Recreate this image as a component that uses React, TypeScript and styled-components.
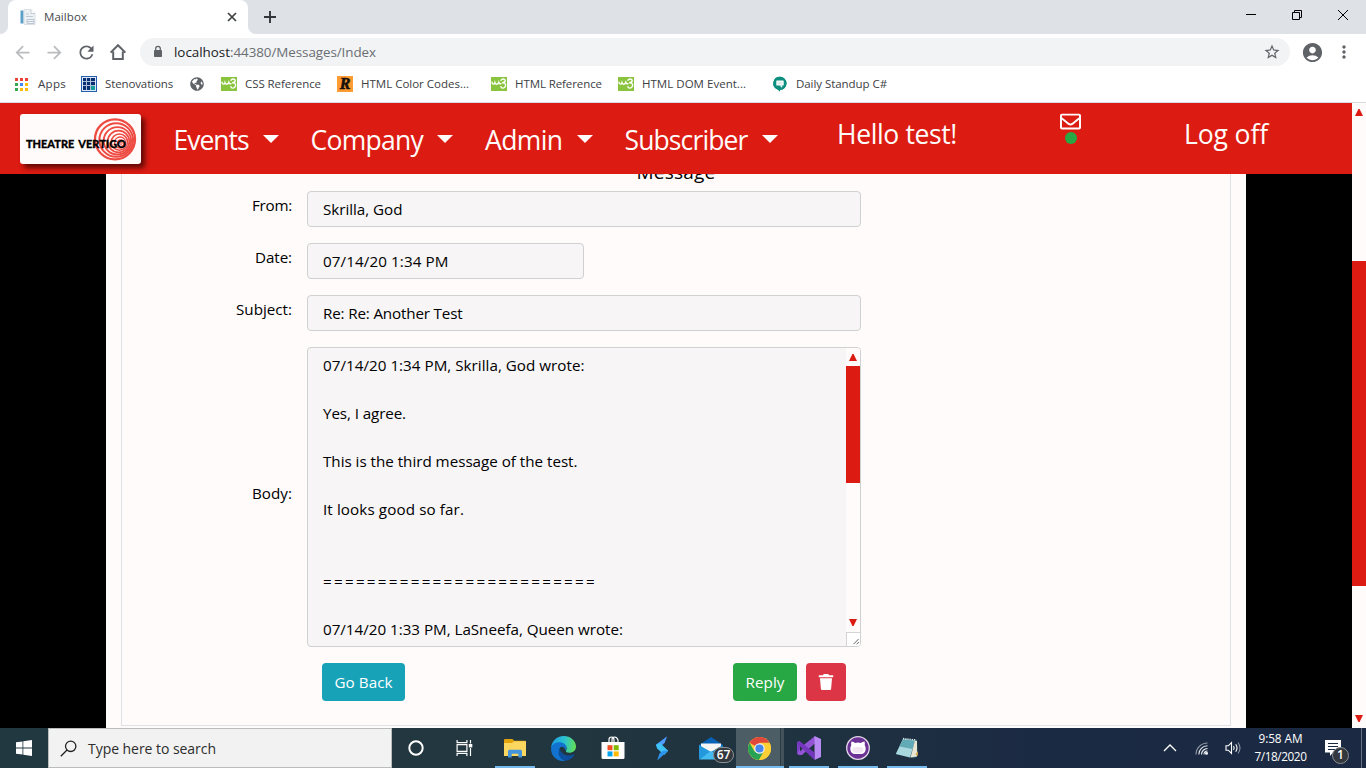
import React, { useLayoutEffect, useRef } from 'react';
import styled, { createGlobalStyle } from 'styled-components';
import { MdArrowBack, MdArrowForward, MdRefresh, MdStarBorder, MdAccountCircle, MdMoreVert } from 'react-icons/md';
import { FaGlobeAmericas, FaRegEnvelope } from 'react-icons/fa';

const red = '#dc1b12';
const snow = '#fffbfa';

const Global = createGlobalStyle`
  * { box-sizing: border-box; }
  html, body { margin: 0; padding: 0; overflow: hidden; }
  body { font-family: "Open Sans", "Noto Sans", sans-serif; color: #000; }
  svg { display: block; flex: none; }
`;

const Screen = styled.div`
  width: 1366px;
  height: 768px;
  display: flex;
  flex-direction: column;
  background: #fff;
  overflow: hidden;
`;

const FitSpan = styled.span`
  display: inline-block;
  white-space: pre;
`;

/* Text whose tracking is adjusted so that it fills the given width. */
function Fit({ w, children }: { w: number; children: string }) {
  const ref = useRef<HTMLSpanElement>(null);
  useLayoutEffect(() => {
    const el = ref.current;
    if (!el) return;
    el.style.letterSpacing = '0px';
    const natural = el.getBoundingClientRect().width;
    el.style.letterSpacing = `${(w - natural) / children.length}px`;
  }, [w, children]);
  return <FitSpan ref={ref}>{children}</FitSpan>;
}

/* ---------- browser frame ---------- */
const TabStrip = styled.div`
  height: 34px;
  flex: none;
  display: flex;
  background: #dee1e6;
`;
const TabFoot = styled.div<{ $side: 'left' | 'right' }>`
  width: 8px;
  background: radial-gradient(circle at ${p => (p.$side === 'left' ? '0 26px' : '8px 26px')}, #dee1e6 7.5px, #fff 8.5px);
  clip-path: inset(26px 0 0 0);
`;
const Tab = styled.div`
  width: 240px;
  display: flex;
  align-items: center;
  padding: 0 10px 0 12px;
  border-radius: 8px 8px 0 0;
  background: #fff;
  font-size: 11.5px;
  color: #45494d;
`;
const TabTitle = styled.div`
  flex: 1;
  margin-left: 8px;
  padding-bottom: 2px;
`;
const NewTab = styled.div`
  width: 28px;
  display: flex;
  align-items: center;
  justify-content: center;
`;
const WindowButtons = styled.div`
  margin-left: auto;
  height: 29px;
  display: flex;
`;
const WindowButton = styled.div`
  width: 46px;
  display: flex;
  align-items: center;
  justify-content: center;
`;
const Toolbar = styled.div`
  height: 36px;
  flex: none;
  display: flex;
  align-items: center;
  padding-left: 6px;
  color: #5f6368;
`;
const ToolButton = styled.div<{ $dim?: boolean }>`
  width: 32px;
  display: flex;
  justify-content: center;
  color: ${p => (p.$dim ? '#babcbe' : '#5f6368')};
`;
const Address = styled.div`
  width: 1150px;
  height: 28px;
  margin: 0 6px;
  display: flex;
  align-items: center;
  padding: 0 9px 0 13px;
  border-radius: 14px;
  background: #f1f3f4;
  font-size: 13.4px;
`;
const Url = styled.div`
  flex: 1;
  display: flex;
  margin-left: 11px;
  color: #6a6e73;
`;
const Host = styled.span`
  color: #202124;
`;
const Bookmarks = styled.div`
  height: 32px;
  flex: none;
  display: flex;
  padding: 0 0 4px 15px;
`;
const Bookmark = styled.div<{ $w: number }>`
  width: ${p => p.$w}px;
  display: flex;
  align-items: center;
  font-size: 11.5px;
  line-height: 14px;
  color: #3c4043;

  & > span {
    padding-bottom: 1px;
  }
`;
const BookmarkIcon = styled.div<{ $w?: number }>`
  width: ${p => p.$w ?? 24}px;
  color: #5f6368;
`;
const FrameLine = styled.div`
  height: 1px;
  flex: none;
  background: #d8dadf;
`;

/* ---------- page ---------- */
const Page = styled.div`
  height: 625px;
  flex: none;
  display: flex;
  background: ${snow};
`;
const PageBody = styled.div`
  width: 1352px;
  display: flex;
  flex-direction: column;
`;
const Nav = styled.nav`
  height: 71px;
  flex: none;
  display: flex;
  align-items: flex-start;
  padding-left: 20px;
  background: ${red};
  color: ${snow};
  font-size: 26.5px;
  line-height: 36px;
`;
const Brand = styled.div`
  width: 121px;
  height: 50px;
  margin: 11px 32.5px 0 0;
  border-radius: 3px;
  background: ${snow};
  box-shadow: 4px 4px 5px rgba(50, 0, 0, 0.7);
`;
const NavItem = styled.div`
  display: flex;
  align-items: center;
  margin: 19px 32px 0 0;
`;
const Caret = styled.span`
  margin: 0 0 3px 14px;
  border: 8px solid transparent;
  border-top-color: ${snow};
  border-bottom: 0;
`;
const Greeting = styled.div`
  width: 223px;
  margin: 13px 0 0 27.5px;
`;
const Inbox = styled.div`
  width: 21px;
  margin: 8px 103px 0 0;
  display: flex;
  flex-direction: column;
  align-items: center;
`;
const UnreadDot = styled.span`
  width: 12px;
  height: 12px;
  border-radius: 50%;
  background: #28a745;
`;
const LogOff = styled.div`
  margin-top: 13px;
`;
const Content = styled.main`
  height: 554px;
  display: flex;
  justify-content: center;
  background: #000;
  overflow: hidden;
`;
const Container = styled.div`
  width: 1140px;
  padding: 0 15px 2px;
  background: ${snow};
`;
const Card = styled.section`
  display: flow-root;
  height: 552px;
  border: 1px solid #dee2e6;
  border-top: 0;
  font-size: 15.2px;
  line-height: 24px;
`;
const Heading = styled.h5`
  margin: -14px 0 7px;
  font-size: 19px;
  font-weight: 500;
  line-height: 24px;
  text-align: center;
`;
const FormRow = styled.div<{ $middle?: boolean }>`
  display: flex;
  align-items: ${p => (p.$middle ? 'center' : 'flex-start')};
  margin-bottom: 16px;
`;
const Label = styled.label<{ $top?: number; $bottom?: number }>`
  width: 185px;
  padding: ${p => p.$top ?? 2}px 15px ${p => p.$bottom ?? 0}px 0;
  text-align: right;
`;
const Field = styled.div<{ $w?: number }>`
  width: ${p => p.$w ?? 554}px;
  height: 36px;
  padding: 5px 15px;
  border: 1px solid #ced0d2;
  border-radius: 4px;
  background: #f7f5f6;
`;
const TextBox = styled.div`
  width: 554px;
  height: 300px;
  display: flex;
  border: 1px solid #ced0d2;
  border-radius: 4px;
  background: #f7f5f6;
  overflow: hidden;
`;
const Lines = styled.div`
  flex: 1;
  padding: 5px 0 0 15px;
`;
const Line = styled.div`
  height: 24px;
`;
const ScrollBar = styled.div`
  width: 14px;
  flex: none;
  display: flex;
  flex-direction: column;
  background: ${snow};
`;
const ArrowBox = styled.div<{ $h: number }>`
  height: ${p => p.$h}px;
  flex: none;
  display: flex;
  align-items: center;
  justify-content: center;
`;
const Thumb = styled.div<{ $before?: number; $h: number }>`
  height: ${p => p.$h}px;
  flex: none;
  margin: ${p => p.$before ?? 0}px 0 auto;
  background: ${red};
`;
const Grip = styled.div`
  height: 14px;
  border: solid #d5d3d3;
  border-width: 1px 0 0 1px;
  background: #fff;
`;
const Actions = styled.div`
  display: flex;
  padding-left: 200px;
`;
const Button = styled.button<{ $w: number; $color: string; $ml?: string }>`
  width: ${p => p.$w}px;
  height: 38px;
  display: flex;
  align-items: center;
  justify-content: center;
  margin-left: ${p => p.$ml ?? '0'};
  padding: 0;
  border: 0;
  border-radius: 4px;
  background: ${p => p.$color};
  color: #fff;
  font: inherit;
`;

/* ---------- task bar ---------- */
const TaskBar = styled.footer`
  height: 40px;
  flex: none;
  display: flex;
  background: linear-gradient(90deg, #213840 0%, #22373f 35%, #1f3240 60%, #1b2a43 75%, #1b2942 100%);
  color: #fff;
`;
const TaskCell = styled.div<{ $w?: number }>`
  width: ${p => p.$w ?? 48}px;
  display: flex;
  align-items: center;
  justify-content: center;
`;
const SearchBox = styled.div`
  width: 344px;
  display: flex;
  align-items: center;
  padding-left: 11px;
  border: 1px solid #b9bcbd;
  background: #f2f2f2;
  color: #2d2d2d;
  font-size: 14px;
`;
const SearchText = styled.div`
  margin-left: 11px;
`;
const TaskApps = styled.div`
  display: flex;
  margin-left: 2px;
`;
const TaskApp = styled.div<{ $open?: boolean; $active?: boolean }>`
  position: relative;
  width: 49px;
  display: flex;
  align-items: center;
  justify-content: center;
  background: ${p => (p.$active ? 'linear-gradient(90deg, transparent 1px, #4d5d65 1px 45px, #2b3b44 45px 46px, #43525b 46px)' : 'none')};
  &::after {
    content: '';
    position: absolute;
    bottom: 0;
    left: ${p => (p.$active ? 1 : 5)}px;
    right: ${p => (p.$active ? 0 : 4)}px;
    height: 2px;
    background: ${p => (p.$open ? '#76b9ed' : 'transparent')};
  }
`;
const Count = styled.span<{ $round?: boolean }>`
  position: absolute;
  left: ${p => (p.$round ? 18 : 27)}px;
  top: 19px;
  width: ${p => (p.$round ? 17 : 21)}px;
  height: ${p => (p.$round ? 17 : 16)}px;
  border: 1px solid #8b9094;
  border-radius: 9px;
  background: #32383d;
  color: #fff;
  font-size: 12px;
  font-weight: 600;
  line-height: 14px;
  text-align: center;
`;
const Tray = styled.div`
  margin-left: auto;
  display: flex;
`;
const Clock = styled.div`
  width: 66px;
  padding: 1px 1px 0 0;
  font-size: 11.8px;
  line-height: 18px;
  text-align: center;
`;
const ActionCenter = styled.div`
  position: relative;
  width: 47px;
  padding: 12px 0 0 11px;
`;
const DesktopEdge = styled.div`
  width: 5px;
  border-left: 1px solid #66707f;
`;

/* ---------- drawings ---------- */
const Favicon = () => (
  <svg width="16" height="16" viewBox="0 0 16 16">
    <rect x="0.5" y="1.5" width="3" height="13" fill="#5a9fc9" />
    <path d="M4 0.5h7l4 4v11H4z" fill="#eef1f4" stroke="#cfd6dc" strokeWidth=".7" />
    <path d="M11 .5v4h4" fill="#fff" stroke="#b9c1c9" strokeWidth=".8" />
    <path d="M6 5h3M6 7.5h7M7 10.5h7v4H7zM7 12.5h7" stroke="#b8c4d0" strokeWidth=".9" fill="none" />
  </svg>
);
const HomeIcon = () => (
  <svg width="18" height="18" viewBox="0 0 18 18" fill="none" stroke="#5f6368" strokeWidth="2">
    <path d="M1.6 9.6 9 2.2l7.4 7.4M4.2 8.5v7.4h9.6V8.5" strokeLinejoin="miter" />
  </svg>
);
const LockIcon = () => (
  <svg width="10" height="14" viewBox="0 0 10 14">
    <rect x="1" y="5" width="8" height="7" rx=".8" fill="#5f6368" />
    <path d="M2.7 5.5V3.6a2.3 2.3 0 0 1 4.6 0v1.9" fill="none" stroke="#5f6368" strokeWidth="1.3" />
  </svg>
);
const W3 = () => (
  <svg width="16" height="14" viewBox="0 0 16 14">
    <rect width="16" height="14" fill="#8ac43f" />
    <path d="M1 5.3C1.2 7.6 3.3 7.7 3.9 5.7 4.4 7.7 7 7.8 7.8 5.3 8.200 6.600 9 7 10 6.600M10 3.3C10.800 1.400 14.300 1.500 14.200 3.600 14.100 5.300 12.200 5.700 11.200 5.700 14 5.500 15.100 7.200 14.500 9 13.600 11.700 10.300 11.800 9.900 9.700" fill="none" stroke="#fff" strokeWidth="1.4" strokeLinecap="round" />
  </svg>
);
const AppsGrid = () => (
  <svg width="13" height="13" viewBox="0 0 13 13" shapeRendering="crispEdges">
    {['#ea4335', '#ea4335', '#ea4335', '#34a853', '#4285f4', '#fbbc05', '#34a853', '#fbbc05', '#fbbc05'].map((c, i) => (
      <rect key={i} x={(i % 3) * 5} y={Math.floor(i / 3) * 5} width="3" height="3" fill={c} />
    ))}
  </svg>
);
const Steno = () => (
  <svg width="16" height="16" viewBox="0 0 16 16" shapeRendering="crispEdges">
    <rect width="16" height="16" fill="#2560b0" />
    <rect x="1" y="1" width="14" height="14" fill="#dfe8f5" />
    <rect x="2" y="2" width="12" height="12" fill="#082f73" />
    <rect x="10" y="10" width="4" height="4" fill="#16a09a" />
    <path d="M5.500 2v12M9.500 2v12M2 5.500h12M2 9.500h12" stroke="#aebfd9" strokeWidth="1" />
  </svg>
);
const OrangeBadge = styled.div`
  width: 16px;
  height: 16px;
  background: #ff9b33;
  color: #16100a;
  font: italic bold 16px/16px "Liberation Serif", serif;
  text-align: center;
  -webkit-text-stroke: 0.6px #16100a;
`;
const Meet = () => (
  <svg width="16" height="16" viewBox="0 0 16 16">
    <path d="M8 .8a6.5 6.5 0 0 1 0 13V15.8L5.5 13.4A6.5 6.5 0 0 1 8 .8z" fill="#0c8f7f" />
    <circle cx="8" cy="7.3" r="6.5" fill="#0c8f7f" />
    <rect x="4.3" y="4.4" width="7.4" height="5.2" rx=".6" fill="#fff" />
    <path d="M7.5 9.5h2.6v2.2z" fill="#fff" />
    <path d="M5.6 6.2h4.8M5.6 7.8h4.8" stroke="#b9dcd7" strokeWidth=".7" />
  </svg>
);
const Logo = () => (
  <svg width="121" height="50" viewBox="0 0 121 50">
    <g fill="none" stroke="#ee4b43">
      <circle cx="95" cy="25.3" r="20" strokeWidth="2.3" />
      <circle cx="96.2" cy="26" r="16.8" strokeWidth="2.1" />
      <circle cx="97.4" cy="26.8" r="13.7" strokeWidth="1.9" />
      <circle cx="98.5" cy="27.5" r="10.8" strokeWidth="1.7" />
      <circle cx="99.4" cy="28.1" r="8.1" strokeWidth="1.5" />
      <circle cx="100.1" cy="28.6" r="5.6" strokeWidth="1.3" />
      <circle cx="100.7" cy="29" r="3.3" strokeWidth="1.1" />
      <circle cx="101" cy="29.2" r="1.2" strokeWidth="1" />
    </g>
    <text x="6" y="34" textLength="100" lengthAdjust="spacingAndGlyphs" wordSpacing="2" fontFamily="Lato, sans-serif" fontWeight="900" fontSize="11.8" fill="#000" stroke="#000" strokeWidth=".3">THEATRE VERTIGO</text>
  </svg>
);
const Arrow = ({ down }: { down?: boolean }) => (
  <svg width="8" height="7" viewBox="0 0 8 7">
    <path d={down ? 'M0 0h8L4.6 7H3.4z' : 'M0 7h8L4.6 0H3.4z'} fill={red} />
  </svg>
);
const GripLines = () => (
  <svg width="13" height="13" viewBox="0 0 13 14">
    <path d="M6.5 12 12 6.5M9.8 12.2l2.5-2.5" stroke="#555" strokeWidth="1" />
  </svg>
);
const Trash = () => (
  <svg width="16" height="18" viewBox="0 0 16 18" fill="#fff">
    <path d="M.8 2.2h4L5.8 1h4.4l1 1.2h4v2H.8zM2 5.2h12L13.1 16q-.1 1-1.1 1H4q-1 0-1.1-1z" />
  </svg>
);
const Windows = () => (
  <svg width="16" height="16" viewBox="0 0 16 16" fill="#fff">
    <path d="M0 2.3 6.5 1.4v6.2H0zM7.3 1.3 16 0v7.6H7.3zM0 8.4h6.5v6.2L0 13.7zM7.3 8.4H16V16l-8.7-1.3z" />
  </svg>
);
const SearchIcon = () => (
  <svg width="17" height="17" viewBox="0 0 17 17" fill="none" stroke="#222" strokeWidth="1.3">
    <circle cx="10.7" cy="6.3" r="5.2" />
    <path d="M7 10 .8 16.2" />
  </svg>
);
const TaskView = () => (
  <svg width="17" height="16" viewBox="0 0 17 16" fill="none" stroke="#fff" strokeWidth="1.2">
    <path d="M1.1 0v2.6h9.8V0M1.1 16v-2.6h9.8V16M1.1 4.6h9.8v6.8H1.1zM14.5 0v3.6M14.5 8v8" />
    <rect x="13.4" y="4.6" width="2.3" height="2.2" fill="#fff" />
  </svg>
);
const Folder = () => (
  <svg width="22" height="19" viewBox="0 0 22 19">
    <path d="M0 1.2Q0 0 1 0h7.5l1.6 1.8H21q1 0 1 1V17H0z" fill="#e2a30d" />
    <path d="M0 4h8l2-1.8h12V17H0z" fill="#fbd75f" />
    <path d="M4 18.5v-6.3q0-1.5 1.5-1.5h11q1.5 0 1.5 1.5v6.3h-3.7v-3.8H7.7v3.8z" fill="#4595dc" />
  </svg>
);
const Edge = () => (
  <svg width="25" height="25" viewBox="0 0 24 24">
    <defs>
      <linearGradient id="edgeTop" x1="0" x2="1" y1=".3" y2=".4">
        <stop offset="0" stopColor="#1b9de2" /><stop offset=".55" stopColor="#2cc4cf" /><stop offset="1" stopColor="#62dc55" />
      </linearGradient>
    </defs>
    <path d="M0 11.5C.6 5 5.5 0 12 0c7 0 12 4.8 12 10 0 4-3 6-6.3 6-2.7 0-3.7-.9-3.3-1.7 1.3-2.4.6-6.3-3.6-6.8C5 6.7 1.6 8.5 0 11.5z" fill="url(#edgeTop)" />
    <path d="M0 12c1-4.500 5-6 8-6 3.800 0 6.700 2 6.700 5.300 0 1.200-.6 2-.9 2.700-.6-2.700-2-3.600-3.400-3.600C7 10.400 6 18.800 13.500 23.700 6 25 0 19.500 0 12z" fill="#1173cf" />
    <path d="M8.3 12.5C5.5 17 9 23.4 14 23.7c4-.3 6.7-2.6 8.3-5.2.4-.7-.2-1-.7-.7-6 2.700-11.300-.3-13.300-5.300z" fill="#0d4f9e" />
  </svg>
);
const Store = () => (
  <svg width="24" height="24" viewBox="0 0 24 24">
    <path d="M8 7V4q0-3 2.5-3T13 4v2M11 6V4q0-3 2.5-3T17 4v3" fill="none" stroke="#fff" strokeWidth="1.2" />
    <path d="M.5 6h23v15.500q0 1.500-1.500 1.500H2Q.5 23 .5 21.500z" fill="#fff" />
    <path d="M6.500 9.200h5v5h-5z" fill="#f25022" /><path d="M12.700 9.200h5v5h-5z" fill="#7fba00" />
    <path d="M6.500 15.400h5v5h-5z" fill="#00a4ef" /><path d="M12.700 15.400h5v5h-5z" fill="#ffb900" />
  </svg>
);
const Bolt = () => (
  <svg width="14" height="25" viewBox="0 0 14 25">
    <path d="M12 .5 1 8.700 2.200 12.500 9 16.500 6 9z" fill="#2b6fe8" />
    <path d="M12 .5 9.700 6.800 6.500 9.800 1 8.700z" fill="#4f9bff" />
    <path d="M1 8.700 2.200 12.500 9.200 19 13.200 14.700 5 7z" fill="#3fc3f5" />
    <path d="M13.200 14.700 2.200 24.500 4.600 17.300 8.200 14.800z" fill="#2d93ee" />
  </svg>
);
const Mail = () => (
  <svg width="24" height="23" viewBox="0 0 24 23">
    <path d="M0 8 12 0l12 8v14H0z" fill="#0762b7" />
    <path d="M2 6.5h20V18H2z" fill="#f5f5f5" />
    <path d="M0 8l12 7L0 22z" fill="#2398dc" /><path d="M24 8 12 15l12 7z" fill="#1683cc" />
    <path d="M0 22.5 12 14l12 8.5z" fill="#43bbf0" />
  </svg>
);
const Chrome = () => (
  <svg width="23" height="23" viewBox="0 0 24 24">
    <circle cx="12" cy="12" r="12" fill="#fdd03b" />
    <path d="M12 12 1.6 6A12 12 0 0 1 22.4 6H12z" fill="#e0483c" />
    <path d="M1.6 6A12 12 0 0 0 11.5 24l5.2-9.3L6.8 15z" fill="#27a353" />
    <path d="M12 6.5h10.7A12 12 0 0 1 11.5 24l5.2-9z" fill="#fcd034" />
    <circle cx="12" cy="12" r="5.5" fill="#f1f1f1" /><circle cx="12" cy="12" r="4.3" fill="#4687ee" />
  </svg>
);
const VisualStudio = () => (
  <svg width="24" height="24" viewBox="0 0 24 24">
    <path d="M0 6v12l2.3 1 3.2-2.7V7.7L2.3 5z" fill="#7a3fc2" />
    <path d="M3 12 18 0v7.3L5 19H2.3L.5 17.7z" fill="#9355d6" />
    <path d="M3 8.5v7l3.5-3.5z" fill="#22343f" />
    <path d="M17.5 0 24 3v18l-6.5 3z" fill="#b98af3" />
    <path d="M2.3 5 17.5 16.5V24L0 7.5z" fill="#7436bd" />
  </svg>
);
const GitHub = () => (
  <svg width="24" height="24" viewBox="0 0 24 24">
    <circle cx="12" cy="12" r="11.3" fill="#6c3195" stroke="#e3d8ea" strokeWidth="1.3" />
    <path d="M5.5 5.5q2 .1 3.7 1.4 2.8-.6 5.6 0 1.700-1.300 3.700-1.400.7 2 .2 3.700 1 1.300 1 3.200 0 5.400-5 5.600H9.300q-5-.2-5-5.600 0-1.900 1-3.200-.5-1.700.2-3.700z" fill="#fff" />
    <path d="M7 11.500q5-1 10 0 1.800 5-2 5.300H9q-3.800-.3-2-5.300z" fill="#f0e5f1" />
  </svg>
);
const Notepad = () => (
  <svg width="24" height="22" viewBox="0 0 24 22">
    <path d="M8 1.5 22 2.5 23 19l-4 2.5L1 17z" fill="#2f5865" />
    <path d="M8 2 20 3.5 15 20.5.8 17z" fill="#a9d8df" />
    <path d="M8 2 20 3.5 17.5 12 4.5 9.500z" fill="#62aab6" />
    <path d="m20 3.5 2 .6v15.400L15.500 20.500z" fill="#e9e5d3" />
    <path d="M8 1.600 21 3" stroke="#d5dfe0" strokeWidth="1.6" strokeDasharray="1.2 1" />
    <path d="M20.300 17.500 23 14v4.500z" fill="#cf9f45" />
  </svg>
);

const LINES: [string, number][] = [
  ['07/14/20 1:34 PM, Skrilla, God wrote:', 261.5], ['', 0], ['Yes, I agree.', 83], ['', 0],
  ['This is the third message of the test.', 254.5], ['', 0], ['It looks good so far.', 141], ['', 0], ['', 0],
  ['=========================', 274], ['', 0], ['07/14/20 1:33 PM, LaSneefa, Queen wrote:', 300],
];
const MENUS: [string, number][] = [['Events', 75], ['Company', 112.5], ['Admin', 77.5], ['Subscriber', 123]];

export default function App() {
  return (
    <Screen>
      <Global />
      <TabStrip>
        <TabFoot $side="left" />
        <Tab>
          <Favicon />
          <TabTitle><Fit w={43}>Mailbox</Fit></TabTitle>
          <svg width="12" height="12" viewBox="0 0 12 12" stroke="#3c4043" strokeWidth="1.7"><path d="m2 2 8 8M10 2l-8 8" /></svg>
        </Tab>
        <TabFoot $side="right" />
        <NewTab>
          <svg width="12" height="12" viewBox="0 0 12 12" stroke="#33373a" strokeWidth="1.9"><path d="M6 0v12M0 6h12" /></svg>
        </NewTab>
        <WindowButtons>
          <WindowButton><svg width="10" height="10" viewBox="0 0 10 10"><path d="M0 4.500h10" stroke="#000" /></svg></WindowButton>
          <WindowButton>
            <svg width="10" height="10" viewBox="0 0 10 10" fill="none" stroke="#000"><path d="M.5 2.500h7v7h-7zM2.500 2.500v-2h7v7h-2" /></svg>
          </WindowButton>
          <WindowButton><svg width="10" height="10" viewBox="0 0 10 10"><path d="m0 0 10 10M10 0 0 10" stroke="#000" /></svg></WindowButton>
        </WindowButtons>
      </TabStrip>
      <Toolbar>
        <ToolButton $dim><MdArrowBack size={21} /></ToolButton>
        <ToolButton $dim><MdArrowForward size={21} /></ToolButton>
        <ToolButton><MdRefresh size={21} /></ToolButton>
        <ToolButton><HomeIcon /></ToolButton>
        <Address>
          <LockIcon />
          <Url><Host><Fit w={56}>localhost</Fit></Host><Fit w={146}>:44380/Messages/Index</Fit></Url>
          <MdStarBorder size={18} />
        </Address>
        <ToolButton><MdAccountCircle size={23} /></ToolButton>
        <ToolButton><MdMoreVert size={20} /></ToolButton>
      </Toolbar>
      <Bookmarks>
        <Bookmark $w={66}><BookmarkIcon $w={23}><AppsGrid /></BookmarkIcon><Fit w={28}>Apps</Fit></Bookmark>
        <Bookmark $w={109}><BookmarkIcon><Steno /></BookmarkIcon><Fit w={68}>Stenovations</Fit></Bookmark>
        <Bookmark $w={31}><BookmarkIcon><FaGlobeAmericas size={14} /></BookmarkIcon></Bookmark>
        <Bookmark $w={116}><BookmarkIcon><W3 /></BookmarkIcon><Fit w={76}>CSS Reference</Fit></Bookmark>
        <Bookmark $w={154}><BookmarkIcon><OrangeBadge>R</OrangeBadge></BookmarkIcon><Fit w={108}>HTML Color Codes...</Fit></Bookmark>
        <Bookmark $w={127}><BookmarkIcon><W3 /></BookmarkIcon><Fit w={87}>HTML Reference</Fit></Bookmark>
        <Bookmark $w={154}><BookmarkIcon><W3 /></BookmarkIcon><Fit w={104}>HTML DOM Event...</Fit></Bookmark>
        <Bookmark $w={130}><BookmarkIcon><Meet /></BookmarkIcon><Fit w={91}>Daily Standup C#</Fit></Bookmark>
      </Bookmarks>
      <FrameLine />

      <Page>
        <PageBody>
          <Nav>
            <Brand><Logo /></Brand>
            {MENUS.map(([name, w]) => (
              <NavItem key={name}><Fit w={w}>{name}</Fit><Caret /></NavItem>
            ))}
            <Greeting><Fit w={120}>Hello test!</Fit></Greeting>
            <Inbox><FaRegEnvelope size={21} /><UnreadDot /></Inbox>
            <LogOff><Fit w={84}>Log off</Fit></LogOff>
          </Nav>
          <Content>
            <Container>
              <Card>
                <Heading><Fit w={79}>Message</Fit></Heading>
                <FormRow><Label><Fit w={40}>From:</Fit></Label><Field><Fit w={79.5}>Skrilla, God</Fit></Field></FormRow>
                <FormRow><Label><Fit w={37}>Date:</Fit></Label><Field $w={277}><Fit w={125.5}>07/14/20 1:34 PM</Fit></Field></FormRow>
                <FormRow><Label><Fit w={56}>Subject:</Fit></Label><Field><Fit w={139.5}>Re: Re: Another Test</Fit></Field></FormRow>
                <FormRow $middle>
                  <Label $top={0} $bottom={8}><Fit w={40}>Body:</Fit></Label>
                  <TextBox>
                    <Lines>{LINES.map(([t, w], i) => <Line key={i}>{t && <Fit w={w}>{t}</Fit>}</Line>)}</Lines>
                    <ScrollBar>
                      <ArrowBox $h={18}><Arrow /></ArrowBox>
                      <Thumb $h={117} />
                      <ArrowBox $h={19}><Arrow down /></ArrowBox>
                      <Grip><GripLines /></Grip>
                    </ScrollBar>
                  </TextBox>
                </FormRow>
                <Actions>
                  <Button $w={83} $color="#17a2b8"><Fit w={58}>Go Back</Fit></Button>
                  <Button $w={64} $color="#28a745" $ml="328px"><Fit w={39}>Reply</Fit></Button>
                  <Button $w={40} $color="#dc3545" $ml="9px" aria-label="Delete"><Trash /></Button>
                </Actions>
              </Card>
            </Container>
          </Content>
        </PageBody>
        <ScrollBar>
          <ArrowBox $h={19}><Arrow /></ArrowBox>
          <Thumb $before={139} $h={325} />
          <ArrowBox $h={19}><Arrow down /></ArrowBox>
        </ScrollBar>
      </Page>

      <TaskBar>
        <TaskCell><Windows /></TaskCell>
        <SearchBox><SearchIcon /><SearchText><Fit w={128}>Type here to search</Fit></SearchText></SearchBox>
        <TaskCell>
          <svg width="16" height="16" viewBox="0 0 16 16"><circle cx="8" cy="8" r="6.7" fill="none" stroke="#fff" strokeWidth="2" /></svg>
        </TaskCell>
        <TaskCell><TaskView /></TaskCell>
        <TaskApps>
          <TaskApp $open><Folder /></TaskApp>
          <TaskApp><Edge /></TaskApp>
          <TaskApp><Store /></TaskApp>
          <TaskApp><Bolt /></TaskApp>
          <TaskApp><Mail /><Count>67</Count></TaskApp>
          <TaskApp $open $active><Chrome /></TaskApp>
          <TaskApp $open><VisualStudio /></TaskApp>
          <TaskApp $open><GitHub /></TaskApp>
          <TaskApp $open><Notepad /></TaskApp>
        </TaskApps>
        <Tray>
          <TaskCell $w={31}>
            <svg width="14" height="8" viewBox="0 0 14 8"><path d="m1 7 6-6 6 6" fill="none" stroke="#fff" strokeWidth="1.3" /></svg>
          </TaskCell>
          <TaskCell $w={33}>
            <svg width="14" height="14" viewBox="0 0 14 14" fill="none" stroke="#e8ebef" strokeWidth="1.1">
              <path d="M1 13.5A11.5 11.5 0 0 1 12.5 2" opacity=".6" />
              <path d="M3.8 13.5A8.7 8.7 0 0 1 12.5 4.8M6.5 13.5a6 6 0 0 1 6-6" /><path d="M9 13.5a3.5 3.5 0 0 1 3.5-3.5" />
              <circle cx="11.5" cy="12.3" r="1" fill="#fff" />
            </svg>
          </TaskCell>
          <TaskCell $w={30}>
            <svg width="17" height="14" viewBox="0 0 17 14" fill="none" stroke="#fff" strokeWidth="1.1">
              <path d="M1 4.8h2.300L6.500 1.500v11L3.300 9.200H1zM8.500 5q1.400 2 0 4M10.700 3.300q2.700 3.700 0 7.400" />
              <path d="M13 1.500q4 5.500 0 11" opacity=".5" />
            </svg>
          </TaskCell>
          <Clock><div><Fit w={44}>9:58 AM</Fit></div><div><Fit w={52}>7/18/2020</Fit></div></Clock>
          <ActionCenter>
            <svg width="16" height="16" viewBox="0 0 16 16"><path d="M0 0h16v12.5H8L5 16v-3.5H0z" fill="#fff" /><path d="M3 3.5h10M3 6.5h10M3 9.5h7" stroke="#1b2942" /></svg>
            <Count $round>1</Count>
          </ActionCenter>
          <DesktopEdge />
        </Tray>
      </TaskBar>
    </Screen>
  );
}
